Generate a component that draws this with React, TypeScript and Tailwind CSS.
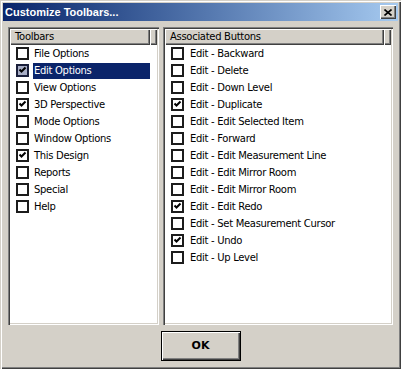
import type { ReactNode } from 'react';

type Item = { label: string; checked: boolean; selected?: boolean };

const toolbars: Item[] = [
  { label: 'File Options', checked: false },
  { label: 'Edit Options', checked: true, selected: true },
  { label: 'View Options', checked: false },
  { label: '3D Perspective', checked: true },
  { label: 'Mode Options', checked: false },
  { label: 'Window Options', checked: false },
  { label: 'This Design', checked: true },
  { label: 'Reports', checked: false },
  { label: 'Special', checked: false },
  { label: 'Help', checked: false },
];

const buttons: Item[] = [
  { label: 'Edit - Backward', checked: false },
  { label: 'Edit - Delete', checked: false },
  { label: 'Edit - Down Level', checked: false },
  { label: 'Edit - Duplicate', checked: true },
  { label: 'Edit - Edit Selected Item', checked: false },
  { label: 'Edit - Forward', checked: false },
  { label: 'Edit - Edit Measurement Line', checked: false },
  { label: 'Edit - Edit Mirror Room', checked: false },
  { label: 'Edit - Edit Mirror Room', checked: false },
  { label: 'Edit - Edit Redo', checked: true },
  { label: 'Edit - Set Measurement Cursor', checked: false },
  { label: 'Edit - Undo', checked: true },
  { label: 'Edit - Up Level', checked: false },
];

const raised =
  'bg-[#d4d0c8] shadow-[inset_1px_1px_#ffffff,inset_-1px_-1px_#404040,inset_-2px_-2px_#808080]';

function Checkbox({ checked, selected }: { checked: boolean; selected?: boolean }) {
  return (
    <span
      className={`flex h-[13px] w-[13px] shrink-0 items-center justify-center border-2 ${
        selected ? 'border-[#1a1f3a] bg-[#a8aec6]' : 'border-[#1c1c1c] bg-white'
      }`}
    >
      {checked && (
        <svg width="9" height="9" viewBox="0 0 9 9">
          <polyline points="1.5,3.5 3.5,5.5 7.5,1.5" fill="none" stroke="#000" strokeWidth="2" />
        </svg>
      )}
    </span>
  );
}

function Panel({
  title,
  width,
  colWidth,
  children,
}: {
  title: string;
  width: string;
  colWidth: string;
  children: ReactNode;
}) {
  return (
    <div
      className={`flex h-[298px] flex-col bg-white p-[2px] shadow-[inset_1px_1px_#808080,inset_2px_2px_#404040,inset_-1px_-1px_#ffffff,inset_-2px_-2px_#d4d0c8] ${width}`}
    >
      <div className="flex h-[16px] shrink-0">
        <div className={`${raised} ${colWidth} pl-[5px] leading-[16px]`}>{title}</div>
        <div className={`${raised} flex-1`} />
      </div>
      <div className="flex flex-col">{children}</div>
    </div>
  );
}

function Row({ item, labelWidth, gap }: { item: Item; labelWidth?: string; gap: string }) {
  return (
    <div className="flex h-[17px] items-center pl-[6px]">
      <Checkbox checked={item.checked} selected={item.selected} />
      <span
        className={`${gap} h-[16px] whitespace-nowrap px-[1px] leading-[16px] ${
          item.selected ? `bg-[#0a246a] text-white ${labelWidth}` : 'text-black'
        }`}
      >
        {item.label}
      </span>
    </div>
  );
}

export default function App() {
  return (
    <div
      className="flex h-[369px] w-[401px] flex-col bg-[#d4d0c8] p-[3px] text-[10px] tracking-[-0.3px] text-black shadow-[inset_1px_1px_#d4d0c8,inset_2px_2px_#ffffff,inset_-1px_-1px_#404040,inset_-2px_-2px_#808080]"
      style={{ fontFamily: '"DejaVu Sans", sans-serif' }}
    >
      <div className="flex h-[18px] shrink-0 items-center justify-between bg-gradient-to-r from-[#0a246a] to-[#a6caf0] pl-[2px] pr-[2px]">
        <span
          className="text-[11px] font-bold tracking-normal text-white"
          style={{ fontFamily: '"Liberation Sans", sans-serif' }}
        >
          Customize Toolbars...
        </span>
        <button className={`${raised} flex h-[14px] w-[16px] items-center justify-center`}>
          <svg width="8" height="7" viewBox="0 0 8 7">
            <path d="M0.5 0.5 L7.5 6.5 M7.5 0.5 L0.5 6.5" stroke="#000" strokeWidth="1.6" />
          </svg>
        </button>
      </div>

      <div className="mt-[6px] flex gap-[4px] px-[5px]">
        <Panel title="Toolbars" width="w-[151px]" colWidth="w-[140px]">
          {toolbars.map((t, i) => (
            <Row key={i} item={t} labelWidth="w-[117px]" gap="ml-[4px]" />
          ))}
        </Panel>
        <Panel title="Associated Buttons" width="w-[230px]" colWidth="w-[219px]">
          {buttons.map((b, i) => (
            <Row key={i} item={b} gap="ml-[5px]" />
          ))}
        </Panel>
      </div>

      <div className="mt-[6px] flex justify-center">
        <button className="flex h-[30px] w-[80px] items-center justify-center border border-black bg-[#d4d0c8] text-[11px] font-bold tracking-normal shadow-[inset_1px_1px_#ffffff,inset_-1px_-1px_#404040,inset_-2px_-2px_#808080]">
          OK
        </button>
      </div>
    </div>
  );
}
